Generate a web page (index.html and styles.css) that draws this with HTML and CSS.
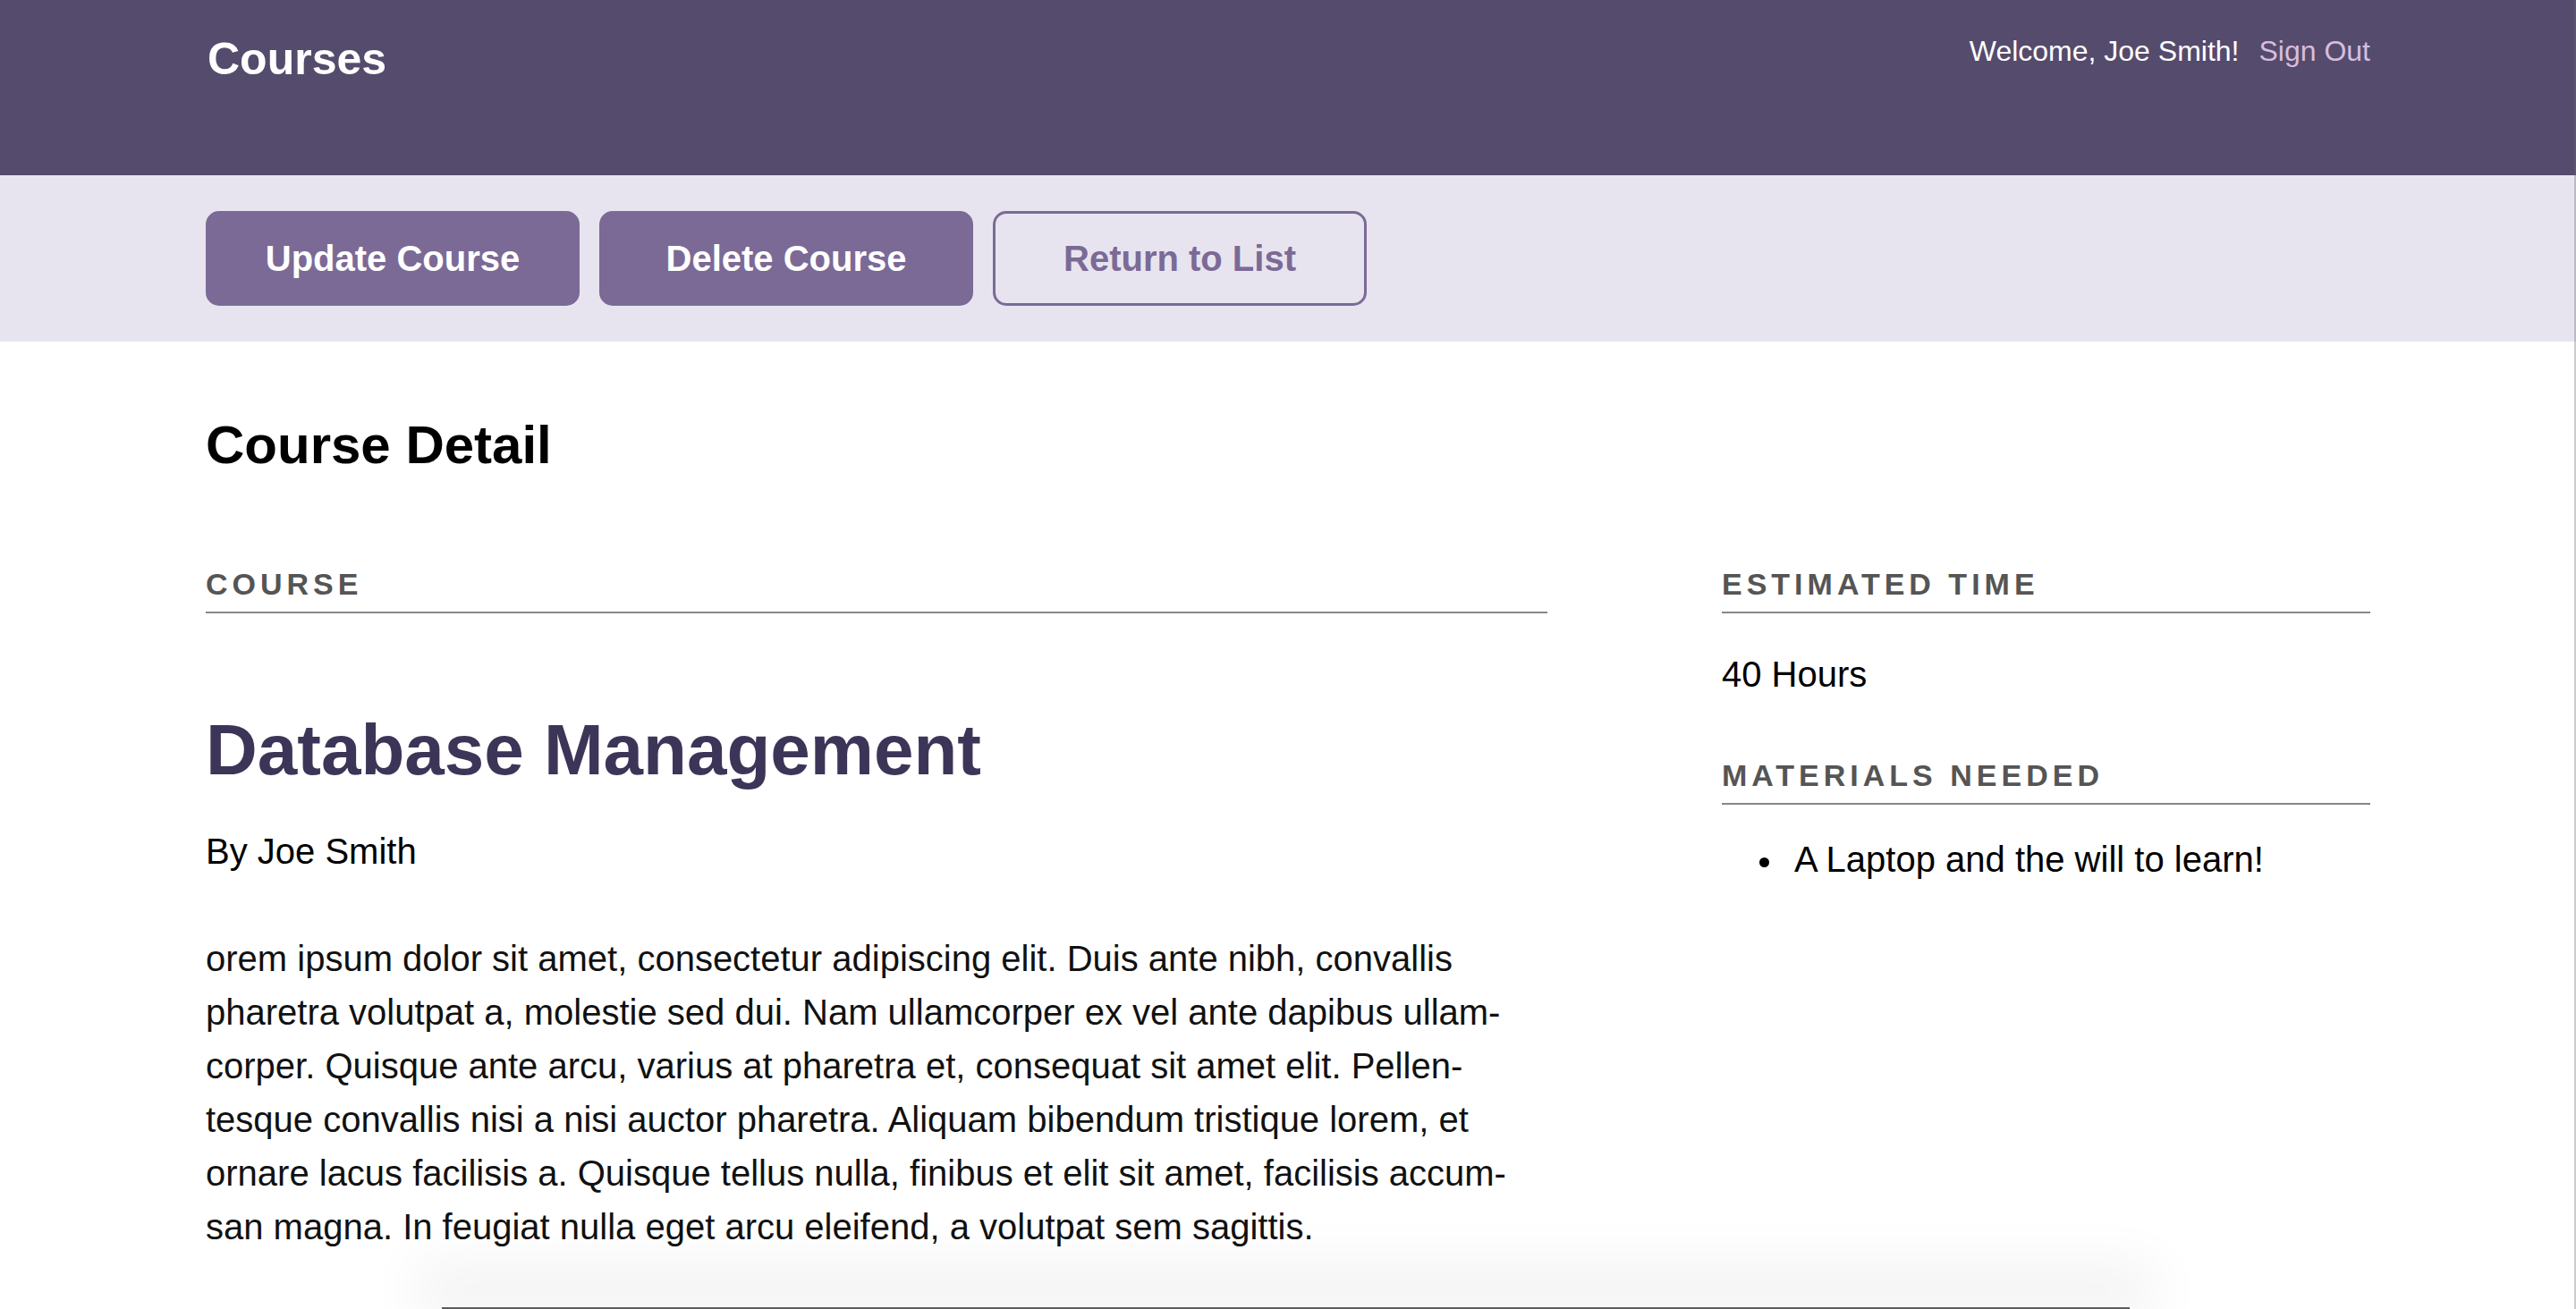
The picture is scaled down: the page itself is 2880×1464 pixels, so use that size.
FILE: index.html
```html
<!DOCTYPE html>
<html lang="en">
<head>
<meta charset="utf-8">
<title>Courses</title>
<link rel="stylesheet" href="styles.css">
</head>
<body>
<header class="site-header">
  <div class="container header-inner">
    <h1 class="logo">Courses</h1>
    <nav class="user-nav"><span class="welcome">Welcome, Joe Smith!</span><a class="signout" href="#">Sign Out</a></nav>
  </div>
</header>
<div class="actions-bar">
  <div class="container actions">
    <a class="button" href="#">Update Course</a>
    <a class="button" href="#">Delete Course</a>
    <a class="button button-secondary" href="#">Return to List</a>
  </div>
</div>
<main class="container">
  <h2 class="page-title">Course Detail</h2>
  <div class="detail-grid">
    <section class="course-main">
      <h3 class="label">Course</h3>
      <h4 class="course-title">Database Management</h4>
      <p class="author">By Joe Smith</p>
      <p class="description">orem ipsum dolor sit amet, consectetur adipiscing elit. Duis ante nibh, convallis pharetra volutpat a, molestie sed dui. Nam ullamcorper ex vel ante dapibus ullam&shy;corper. Quisque ante arcu, varius at pharetra et, consequat sit amet elit. Pellen&shy;tesque convallis nisi a nisi auctor pharetra. Aliquam bibendum tristique lorem, et ornare lacus facilisis a. Quisque tellus nulla, finibus et elit sit amet, facilisis accum&shy;san magna. In feugiat nulla eget arcu eleifend, a volutpat sem sagittis.</p>
    </section>
    <aside class="course-side">
      <h3 class="label">Estimated Time</h3>
      <p class="hours">40 Hours</p>
      <h3 class="label label-spaced">Materials Needed</h3>
      <ul class="materials">
        <li>A Laptop and the will to learn!</li>
      </ul>
    </aside>
  </div>
</main>
<div class="window-edge"></div>
</body>
</html>
```
FILE: styles.css
```css
* { box-sizing: border-box; }

html, body {
  margin: 0;
  padding: 0;
}

body {
  font-family: "Liberation Sans", Arial, Helvetica, sans-serif;
  color: #000;
  background: #fff;
  overflow: hidden;
}

body::after {
  content: "";
  position: fixed;
  top: 0;
  right: 0;
  width: 2px;
  height: 100%;
  background: rgba(110, 110, 110, 0.35);
}

.container {
  width: 2420px;
  margin: 0 auto;
}

.site-header {
  background: #554b6d;
  height: 196px;
  padding-top: 41px;
}

.header-inner {
  display: flex;
  justify-content: space-between;
  align-items: flex-start;
}

.logo {
  margin: 0;
  font-size: 50px;
  line-height: 1;
  font-weight: 700;
  color: #fff;
  padding-left: 2px;
}

.user-nav {
  display: flex;
  font-size: 32px;
  line-height: 1;
}

.welcome { color: #fff; }

.signout {
  color: #d8bddd;
  text-decoration: none;
  margin-left: 22px;
}

.actions-bar {
  background: #e7e4ef;
  padding: 40px 0;
}

.actions {
  display: flex;
  gap: 22px;
}

.button {
  display: flex;
  align-items: center;
  justify-content: center;
  width: 418px;
  height: 106px;
  border-radius: 15px;
  background: #7b6a96;
  border: 3px solid #7b6a96;
  color: #fff;
  font-size: 40px;
  font-weight: 700;
  line-height: 1;
  text-decoration: none;
}

.button-secondary {
  background: transparent;
  color: #7b6a96;
}

.page-title {
  margin: 86px 0 0;
  font-size: 60px;
  line-height: 1;
  font-weight: 700;
}

.detail-grid {
  display: grid;
  grid-template-columns: 1500px 725px;
  column-gap: 195px;
  margin-top: 108px;
  align-items: start;
}

.label {
  margin: 0;
  font-size: 34px;
  line-height: 1;
  font-weight: 700;
  color: #555;
  text-transform: uppercase;
  letter-spacing: 5px;
  padding-bottom: 14px;
  border-bottom: 2px solid #888;
}

.course-title {
  margin: 113px 0 0;
  font-size: 80px;
  line-height: 1;
  font-weight: 700;
  color: #3d3558;
}

.author {
  margin: 43px 0 0;
  font-size: 40px;
  line-height: 60px;
}

.description {
  margin: 60px 0 0;
  font-size: 40px;
  line-height: 60px;
  color: #111;
}

.hours {
  margin: 38px 0 0;
  font-size: 40px;
  line-height: 60px;
}

.label-spaced {
  margin-top: 66px;
}

.materials {
  margin: 31px 0 0;
  padding-left: 81px;
  font-size: 40px;
  line-height: 60px;
  list-style: none;
}

.materials li::before {
  content: "";
  display: inline-block;
  width: 11px;
  height: 11px;
  border-radius: 50%;
  background: #000;
  margin-left: -39px;
  margin-right: 28px;
  vertical-align: middle;
}

.window-edge {
  position: fixed;
  left: 494px;
  bottom: 0;
  width: 1887px;
  height: 2px;
  background: #5c5c5c;
  box-shadow: 0 -20px 60px 30px rgba(0, 0, 0, 0.05);
}
```
